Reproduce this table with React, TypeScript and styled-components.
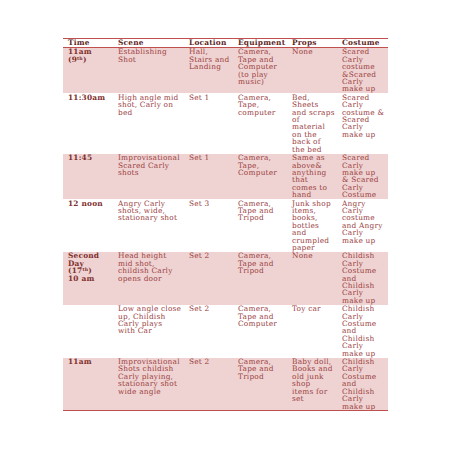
import React from "react";
import styled, { createGlobalStyle } from "styled-components";

const GlobalStyle = createGlobalStyle`
  html, body {
    margin: 0;
    padding: 0;
    background: #ffffff;
  }
`;

const Page = styled.div`
  width: 452px;
  height: 452px;
  padding: 38px 0 0 63px;
  box-sizing: border-box;
  font-family: "DejaVu Serif", "Liberation Serif", serif;
`;

const Table = styled.table`
  width: 325px;
  table-layout: fixed;
  border-collapse: collapse;
  border-top: 1px solid #c0504d;
  border-bottom: 1px solid #c0504d;
  font-size: 7.4px;
  letter-spacing: 0.2px;
  line-height: 7.4px;
  color: #9a413f;
`;

const HeadCell = styled.th<{ $w: number }>`
  box-sizing: border-box;
  width: ${(p) => p.$w}px;
  text-align: left;
  font-weight: bold;
  color: #5e2624;
  padding: 0 0 0.5px 5px;
  height: 8px;
  border-bottom: 1px solid #c0504d;
  white-space: nowrap;
`;

const Row = styled.tr<{ $shaded: boolean }>`
  background: ${(p) => (p.$shaded ? "#efd3d2" : "#ffffff")};
`;

const Cell = styled.td<{ $bold?: boolean }>`
  vertical-align: top;
  padding: 0.5px 0 0.5px 5px;
  white-space: nowrap;
  overflow: hidden;
  font-weight: ${(p) => (p.$bold ? "bold" : "normal")};
  color: ${(p) => (p.$bold ? "#7e2f2d" : "inherit")};
`;

const Sup = styled.sup`
  font-size: 4.6px;
  line-height: 0;
  vertical-align: 2px;
`;

type Line = React.ReactNode;

interface IShot {
  time: Line[];
  scene: Line[];
  location: Line[];
  equipment: Line[];
  props: Line[];
  costume: Line[];
}

const childishCostume = ["Childish", "Carly", "Costume", "and", "Childish", "Carly", "make up"];

const shots: IShot[] = [
  {
    time: ["11am", <>(9<Sup>th</Sup>)</>],
    scene: ["Establishing", "Shot"],
    location: ["Hall,", "Stairs and", "Landing"],
    equipment: ["Camera,", "Tape and", "Computer", "(to play", "music)"],
    props: ["None"],
    costume: ["Scared", "Carly", "costume", "&Scared", "Carly", "make up"],
  },
  {
    time: ["11:30am"],
    scene: ["High angle mid", "shot, Carly on", "bed"],
    location: ["Set 1"],
    equipment: ["Camera,", "Tape,", "computer"],
    props: ["Bed,", "Sheets", "and scraps", "of", "material", "on the", "back of", "the bed"],
    costume: ["Scared", "Carly", "costume &", "Scared", "Carly", "make up"],
  },
  {
    time: ["11:45"],
    scene: ["Improvisational", "Scared Carly", "shots"],
    location: ["Set 1"],
    equipment: ["Camera,", "Tape,", "Computer"],
    props: ["Same as", "above&", "anything", "that", "comes to", "hand"],
    costume: ["Scared", "Carly", "make up", "& Scared", "Carly", "Costume"],
  },
  {
    time: ["12 noon"],
    scene: ["Angry Carly", "shots, wide,", "stationary shot"],
    location: ["Set 3"],
    equipment: ["Camera,", "Tape and", "Tripod"],
    props: ["Junk shop", "items,", "books,", "bottles", "and", "crumpled", "paper"],
    costume: ["Angry", "Carly", "costume", "and Angry", "Carly", "make up"],
  },
  {
    time: ["Second", "Day", <>(17<Sup>th</Sup>)</>, "10 am"],
    scene: ["Head height", "mid shot,", "childish Carly", "opens door"],
    location: ["Set 2"],
    equipment: ["Camera,", "Tape and", "Tripod"],
    props: ["None"],
    costume: childishCostume,
  },
  {
    time: [],
    scene: ["Low angle close", "up, Childish", "Carly plays", "with Car"],
    location: ["Set 2"],
    equipment: ["Camera,", "Tape and", "Computer"],
    props: ["Toy car"],
    costume: childishCostume,
  },
  {
    time: ["11am"],
    scene: ["Improvisational", "Shots childish", "Carly playing,", "stationary shot", "wide angle"],
    location: ["Set 2"],
    equipment: ["Camera,", "Tape and", "Tripod"],
    props: ["Baby doll,", "Books and", "old junk", "shop", "items for", "set"],
    costume: childishCostume,
  },
];

const columns: { key: keyof IShot; label: string; w: number }[] = [
  { key: "time", label: "Time", w: 50 },
  { key: "scene", label: "Scene", w: 71 },
  { key: "location", label: "Location", w: 49 },
  { key: "equipment", label: "Equipment", w: 54 },
  { key: "props", label: "Props", w: 50 },
  { key: "costume", label: "Costume", w: 51 },
];

function Lines({ lines }: { lines: Line[] }) {
  return (
    <>
      {lines.map((line, i) => (
        <React.Fragment key={i}>
          {i > 0 && <br />}
          {line}
        </React.Fragment>
      ))}
    </>
  );
}

export default function App() {
  return (
    <Page>
      <GlobalStyle />
      <Table>
        <thead>
          <tr>
            {columns.map((c) => (
              <HeadCell key={c.key} $w={c.w}>
                {c.label}
              </HeadCell>
            ))}
          </tr>
        </thead>
        <tbody>
          {shots.map((shot, i) => (
            <Row key={i} $shaded={i % 2 === 0}>
              {columns.map((c) => (
                <Cell key={c.key} $bold={c.key === "time"}>
                  <Lines lines={shot[c.key]} />
                </Cell>
              ))}
            </Row>
          ))}
        </tbody>
      </Table>
    </Page>
  );
}
